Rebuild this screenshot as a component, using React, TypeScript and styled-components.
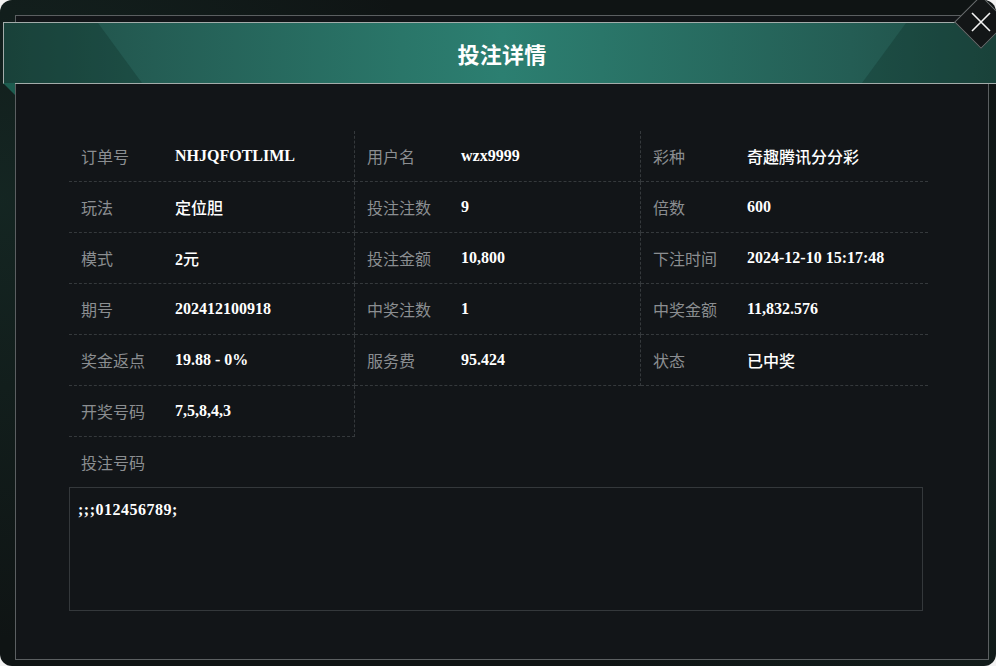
import React from 'react';
import styled, { createGlobalStyle } from 'styled-components';

const GlobalStyle = createGlobalStyle`
  html, body {
    margin: 0;
    padding: 0;
    background: #f2f2f2;
  }
  * {
    box-sizing: border-box;
  }
`;

const Screen = styled.div`
  position: relative;
  width: 996px;
  height: 666px;
  padding: 15px 7px 6px 15px;
  border-radius: 12px;
  overflow: hidden;
  background:
    radial-gradient(circle at 0% 30%, rgba(30, 70, 60, 0.35), transparent 40%),
    radial-gradient(circle at 100% 70%, rgba(30, 70, 60, 0.25), transparent 40%),
    #0f1414;
  font-family: 'Noto Sans CJK SC', 'Noto Sans', sans-serif;
`;

const Frame = styled.div`
  height: 100%;
  border: 1px solid #5b5f61;
  background: #121518;
  display: flex;
  flex-direction: column;
`;

const Header = styled.div`
  position: relative;
  height: 62px;
  margin: 6px -12px 0 -13px;
  border: 1px solid #a3acaa;
  border-right: none;
  display: flex;
  align-items: center;
  justify-content: center;
  background: linear-gradient(
    to right,
    #1f4c44 0%,
    #245d54 15%,
    #2a7669 40%,
    #2c7f71 50%,
    #2a7669 60%,
    #245d54 85%,
    #1f4c44 100%
  );

  &::before,
  &::after {
    content: '';
    position: absolute;
    top: 0;
    bottom: 0;
    width: 150px;
    background: rgba(10, 40, 34, 0.28);
  }

  &::before {
    left: 0;
    clip-path: polygon(0 0, 94px 0, 138px 100%, 0 100%);
  }

  &::after {
    right: 0;
    clip-path: polygon(12px 100%, 56px 0, 100% 0, 100% 100%);
  }
`;

const Title = styled.h1`
  position: relative;
  z-index: 1;
  margin: 0;
  font-size: 22px;
  font-weight: 700;
  color: #ffffff;
  letter-spacing: 0.3px;
`;

const Fold = styled.span<{ $side: 'left' | 'right' }>`
  position: absolute;
  top: 100%;
  width: 12px;
  height: 12px;
  ${({ $side }) =>
    $side === 'left'
      ? `left: -1px; background: #1d5c4f; clip-path: polygon(0 0, 100% 0, 100% 100%);`
      : `right: -5px; width: 7px; background: #34393a; clip-path: polygon(0 0, 100% 0, 0 100%);`}
`;

const CloseButton = styled.button`
  position: absolute;
  top: 3px;
  right: -4px;
  width: 38px;
  height: 38px;
  padding: 0;
  border: 1px solid #6a6f70;
  background: #131617;
  transform: rotate(45deg);
  display: flex;
  align-items: center;
  justify-content: center;
  cursor: pointer;

  svg {
    transform: rotate(-45deg);
  }
`;

const Body = styled.div`
  padding: 47px 0 0 53px;
`;

const Grid = styled.div`
  display: grid;
  grid-template-columns: 286px 286px 287px;
`;

const Cell = styled.div<{ $last?: boolean }>`
  display: flex;
  align-items: center;
  height: 51px;
  padding-bottom: 1px;
  border-bottom: 1px dashed #35393c;
  border-right: ${({ $last }) => ($last ? 'none' : '1px dashed #35393c')};
`;

const Label = styled.span`
  flex: 0 0 106px;
  padding-left: 12px;
  font-size: 16px;
  color: #8b8e91;
`;

const Value = styled.span`
  padding-top: 1px;
  font-family: 'Liberation Serif', 'Noto Sans CJK SC', serif;
  font-size: 16px;
  font-weight: 700;
  color: #ffffff;
`;

const Cjk = styled.span`
  font-family: 'Noto Sans CJK SC', sans-serif;
  font-weight: 500;
`;

const SectionLabel = styled.div`
  height: 50px;
  display: flex;
  align-items: center;
  padding-left: 12px;
  padding-bottom: 1px;
  font-size: 16px;
  color: #8b8e91;
`;

const CodeBox = styled.div`
  width: 854px;
  height: 124px;
  border: 1px solid #34383b;
  padding: 13px 8px;
  font-family: 'Liberation Serif', serif;
  font-size: 16px;
  font-weight: 700;
  letter-spacing: 0.5px;
  color: #ffffff;
`;

const rows: [string, string][] = [
  ['订单号', 'NHJQFOTLIML'],
  ['用户名', 'wzx9999'],
  ['彩种', '奇趣腾讯分分彩'],
  ['玩法', '定位胆'],
  ['投注注数', '9'],
  ['倍数', '600'],
  ['模式', '2元'],
  ['投注金额', '10,800'],
  ['下注时间', '2024-12-10 15:17:48'],
  ['期号', '202412100918'],
  ['中奖注数', '1'],
  ['中奖金额', '11,832.576'],
  ['奖金返点', '19.88 - 0%'],
  ['服务费', '95.424'],
  ['状态', '已中奖'],
  ['开奖号码', '7,5,8,4,3'],
];

// split latin / chinese runs so the chinese part gets its own weight
const renderValue = (text: string) =>
  text.split(/([\u4e00-\u9fff]+)/).map((part, i) =>
    /[\u4e00-\u9fff]/.test(part) ? <Cjk key={i}>{part}</Cjk> : part
  );

export default function App() {
  return (
    <>
      <GlobalStyle />
      <Screen>
        <Frame>
          <Header>
            <Title>投注详情</Title>
            <Fold $side="left" />
            <Fold $side="right" />
          </Header>
          <Body>
            <Grid>
              {rows.map(([label, value], i) => (
                <Cell key={label} $last={i % 3 === 2}>
                  <Label>{label}</Label>
                  <Value>{renderValue(value)}</Value>
                </Cell>
              ))}
            </Grid>
            <SectionLabel>投注号码</SectionLabel>
            <CodeBox>;;;012456789;</CodeBox>
          </Body>
        </Frame>
        <CloseButton aria-label="关闭">
          <svg width="20" height="20" viewBox="0 0 20 20">
            <path d="M1 1 L19 19 M19 1 L1 19" stroke="#f4f4f4" strokeWidth="1.6" fill="none" />
          </svg>
        </CloseButton>
      </Screen>
    </>
  );
}
